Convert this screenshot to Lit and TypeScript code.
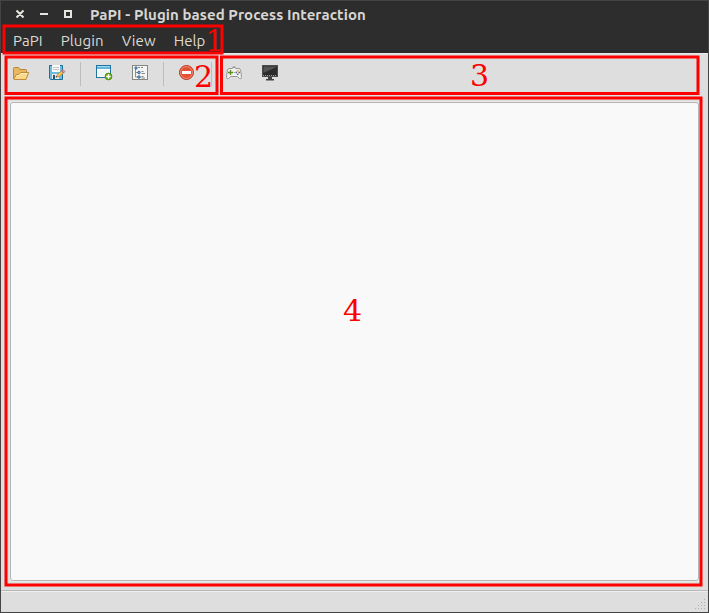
import { LitElement, html, css, svg } from "lit";
import { customElement } from "lit/decorators.js";

const openIcon = svg`
  <path d="M.5 14V3.5Q.5 2.5 1.5 2.5H5Q6 2.5 6.3 3.5L6.7 4.5H12.5Q13.5 4.5 13.5 5.5V7" fill="#e8b860" stroke="#bd8536"/>
  <path d="M1 13.8L3.3 9.5H6L7.5 7.5H15.7L13 14.5H1.2Z" fill="#fbd98b" stroke="#c38a3c" stroke-linejoin="round"/>
  <path d="M4 10.5H6.5L8 8.5H14" fill="none" stroke="#fff0bd"/>`;
const saveIcon = svg`
  <path d="M.5 .5H13.5V14.5H1.5L.5 13.5Z" fill="#6dbbe0" stroke="#1d7099"/>
  <path d="M3 0H11V7H3Z" fill="#fafafa"/>
  <path d="M4 2.5H10M4 4.5H10" stroke="#c3c5c3"/>
  <path d="M3 9H10V14H3Z" fill="#eceeee"/><path d="M4 10H6V14H4Z" fill="#23566f"/>
  <path d="M7 12L8.5 9.5 12.5 6 14.5 8 10.5 11.5Z" fill="#f8c060" stroke="#b87828" stroke-width=".7"/>
  <path d="M12.5 5.5L14 4.5 15.7 6.3 14.8 8Z" fill="#e0a0a0" stroke="#8c5b5b" stroke-width=".6"/>
  <path d="M6.5 12.5L7.2 11 8.3 12Z" fill="#333"/>`;
const windowIcon = svg`
  <rect x=".5" y=".5" width="14" height="12" fill="#f1f4f4" stroke="#20739b"/>
  <path d="M1 1H14V4H1Z" fill="#62b5dc"/><path d="M1 1.5H14" stroke="#a4d9ef"/>
  <path d="M1.5 4.5H13.5V11.5H1.5Z" fill="none" stroke="#fff"/>
  <circle cx="12.5" cy="11.5" r="3.4" fill="#69ae14" stroke="#458408" stroke-width=".8"/>
  <path d="M12.5 9.3V13.7M10.3 11.5H14.7" stroke="#fff" stroke-width="1.4"/>`;
const treeIcon = svg`
  <rect x=".5" y=".5" width="15" height="14" fill="#f5f5f4" stroke="#858782"/>
  <path d="M3.5 4V12H6M3.5 7.5H6" fill="none" stroke="#8d8d8d"/>
  <g fill="#78a8d0" stroke="#2d5d88" stroke-width=".8"><circle cx="4" cy="3" r="1.2"/><circle cx="7" cy="7.5" r="1.3"/><circle cx="7" cy="12" r="1.3"/></g>
  <path d="M6 2.5H8M9 2.5H11M9.5 6.5H11.5M9.5 8.5H13M9.5 11.5H11.5M9.5 13H13" stroke="#6b6b6b" stroke-width=".8"/>`;
const stopIcon = svg`
  <circle cx="7.5" cy="7.5" r="7" fill="#e65136" stroke="#b53823"/>
  <circle cx="7.5" cy="7.5" r="6" fill="none" stroke="#f19a83" stroke-width=".8"/>
  <rect x="3" y="6" width="9" height="3" fill="#fff"/>`;
const padIcon = svg`
  <path d="M8 1V5" stroke="#8e8e8e" stroke-width="1.2"/>
  <path d="M3 3.5H6.5V2.5H9.5V3.5H13Q14.4 3.5 14.8 6L15.5 12.5Q15.3 14.5 13.5 13.5L11.5 11.5H4.5L2.5 13.5Q.7 14.5 .5 12.5L1.2 6Q1.6 3.5 3 3.5Z" fill="#f2f2f1" stroke="#969696"/>
  <path d="M4.5 5V10M2 7.5H7" stroke="#5a8d1c" stroke-width="1.3"/>
  <path d="M7.5 7.5H9" stroke="#aaa"/>
  <rect x="11" y="5" width="1.5" height="1.5" fill="#e4a326"/><rect x="9.5" y="6.7" width="1.5" height="1.5" fill="#356eb0"/>
  <rect x="12.5" y="6.7" width="1.5" height="1.5" fill="#d33b2c"/><rect x="11" y="8.5" width="1.5" height="1.5" fill="#347dc0"/>`;
const screenIcon = svg`
  <rect x=".5" y=".5" width="15" height="11" fill="#2c2c2c" stroke="#4d4d4d"/>
  <path d="M1.5 1.5H14.5V2L1.5 8Z" fill="#555"/>
  <path d="M1 10.5H15" stroke="#a0a0a0" stroke-dasharray="1 1"/>
  <path d="M6 12H10V14H12V15.5H4V14H6Z" fill="#414141"/>`;

@customElement("app-root")
export class AppRoot extends LitElement {
  static styles = css`
    :host { display: block; height: 613px; font-family: Ubuntu, "Noto Sans", sans-serif; }
    .window { position: relative; box-sizing: border-box; width: 709px; height: 613px; display: flex; flex-direction: column; border: 1px solid #454444; background: #dedede; overflow: hidden; }
    .title { height: 26px; flex: none; display: flex; align-items: center; background: #2d2d2d; color: #d8d6d2; }
    .controls { width: 89px; height: 26px; flex: none; }
    .title span { font-size: 15px; font-weight: 700; line-height: 26px; white-space: pre; letter-spacing: .07px; padding-top: 2px; }
    .menu { height: 26px; flex: none; display: flex; gap: 18px; padding-left: 12px; background: #2d2d2d; color: #dfdbd2; font-size: 15px; letter-spacing: .1px; line-height: 27px; }
    .tools { height: 49px; flex: none; box-sizing: border-box; display: flex; align-items: flex-start; padding: 11px 0 0 12px; border-top: 1px solid #eaeaea; }
    .tools svg { width: 16px; height: 16px; margin-right: 20px; flex: none; overflow: visible; }
    .tools .last { margin-right: 16px; }
    .sep { width: 1px; height: 24px; margin: -3px 15px 0 -5px; background: #bcbcbc; flex: none; }
    .sep.end { margin: -3px 14px 0 0; }
    .canvas { box-sizing: border-box; height: 479px; margin: 0 9px; flex: none; border: 1px solid #b5b5b5; border-radius: 3px; background: #f9f9f9; box-shadow: 0 0 0 1px #e9e9e9; }
    .status { flex: 1; margin-top: 9px; border-top: 1px solid #b8b8b8; box-shadow: inset 0 1px #eeeeee; display: flex; justify-content: flex-end; align-items: flex-end; }
    .grip { width: 12px; height: 12px; margin: 0 1px 1px 0; }
    .marks { position: absolute; left: -1px; top: -1px; width: 709px; height: 613px; font-family: "DejaVu Serif", serif; font-size: 30px; }
  `;

  icon(art: unknown, cls = "") {
    return html`<svg class=${cls} viewBox="0 0 16 16">${art}</svg>`;
  }

  render() {
    return html`<div class="window">
      <div class="title">
        <svg class="controls" viewBox="0 0 89 26" fill="none" stroke="#e6e4df" stroke-width="2">
          <path d="M15.5 9.5L22.5 16.5M22.5 9.5L15.5 16.5M39 13H47M64 10H70V16H64Z"/>
        </svg>
        <span>PaPI - Plugin based Process Interaction</span>
      </div>
      <div class="menu"><span>PaPI</span><span>Plugin</span><span>View</span><span>Help</span></div>
      <div class="tools">
        ${this.icon(openIcon)}${this.icon(saveIcon)}<i class="sep"></i>
        ${this.icon(windowIcon)}${this.icon(treeIcon)}<i class="sep"></i>
        ${this.icon(stopIcon, "last")}<i class="sep end"></i>
        ${this.icon(padIcon)}${this.icon(screenIcon)}
      </div>
      <div class="canvas"></div>
      <div class="status">
        <svg class="grip" viewBox="0 0 12 12" fill="#b0b0b0">
          ${[[9, 0], [6, 3], [9, 3], [3, 6], [6, 6], [9, 6], [0, 9], [3, 9], [6, 9], [9, 9]].map(([x, y]) => svg`<rect x=${x} y=${y} width="1" height="1"/>`)}
        </svg>
      </div>
      <svg class="marks" viewBox="0 0 709 613" fill="none" stroke="#f00" stroke-width="3">
        <rect x="4" y="26" width="218" height="27"/>
        <rect x="6" y="57" width="211" height="36.5"/>
        <rect x="221.5" y="57" width="476.5" height="36.5"/>
        <rect x="6" y="98" width="695" height="487"/>
        <g fill="#f00" stroke="none">
          <text x="205" y="51">1</text><text x="194" y="87">2</text>
          <text x="470" y="86">3</text><text x="343" y="321">4</text>
        </g>
      </svg>
    </div>`;
  }
}
